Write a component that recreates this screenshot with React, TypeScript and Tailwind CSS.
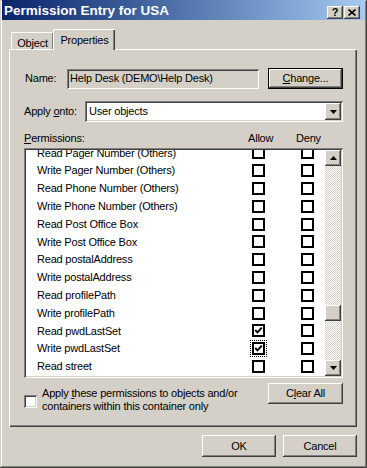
import React from "react";

const raised =
  "shadow-[inset_-1px_-1px_#404040,inset_1px_1px_#ffffff,inset_-2px_-2px_#808080,inset_2px_2px_#d4d0c8]";
const sunken =
  "shadow-[inset_1px_1px_#808080,inset_-1px_-1px_#ffffff,inset_2px_2px_#404040,inset_-2px_-2px_#d4d0c8]";

const rows: { label: string; allow?: boolean; focus?: boolean }[] = [
  { label: "Read Pager Number (Others)" },
  { label: "Write Pager Number (Others)" },
  { label: "Read Phone Number (Others)" },
  { label: "Write Phone Number (Others)" },
  { label: "Read Post Office Box" },
  { label: "Write Post Office Box" },
  { label: "Read postalAddress" },
  { label: "Write postalAddress" },
  { label: "Read profilePath" },
  { label: "Write profilePath" },
  { label: "Read pwdLastSet", allow: true },
  { label: "Write pwdLastSet", allow: true, focus: true },
  { label: "Read street" },
];

function Check({ checked, focus }: { checked?: boolean; focus?: boolean }) {
  return (
    <div
      className={
        focus
          ? "w-[13px] h-[13px] border-2 border-black bg-white flex items-center justify-center outline-1 outline-dotted outline-black outline-offset-[1px]"
          : "w-[13px] h-[13px] border-2 border-black bg-white flex items-center justify-center"
      }
    >
      {checked && (
        <svg width="9" height="9" viewBox="0 0 9 9">
          <polyline points="1.2,4 3.5,6.4 7.8,1.6" fill="none" stroke="black" strokeWidth="1.9" />
        </svg>
      )}
    </div>
  );
}

function Arrow({ dir }: { dir: "up" | "down" }) {
  return (
    <svg width="7" height="4" viewBox="0 0 7 4">
      {dir === "down" ? <polygon points="0,0 7,0 3.5,4" fill="black" /> : <polygon points="0,4 7,4 3.5,0" fill="black" />}
    </svg>
  );
}

export default function App() {
  return (
    <div
      className={`w-[367px] h-[468px] bg-[#d4d0c8] font-['Liberation_Sans',Arial,sans-serif] text-[11px] tracking-[-0.2px] text-black flex flex-col overflow-hidden shadow-[inset_-1px_-1px_#404040,inset_1px_1px_#d4d0c8,inset_-2px_-2px_#808080,inset_2px_2px_#ffffff]`}
    >
      {/* Title bar */}
      <div className="mx-[2px] h-[20px] shrink-0 flex items-center bg-linear-to-r from-[#0a246a] to-[#a6caf0] pl-[2px] pr-[5px]">
        <span className="font-['Liberation_Sans',Arial,sans-serif] font-bold text-white text-[13.5px] leading-none tracking-[0px] mt-[1px]">
          Permission Entry for USA
        </span>
        <div className="ml-auto flex gap-[1px] mt-[4px]">
          <div className={`w-[16px] h-[13px] bg-[#d4d0c8] ${raised} flex items-center justify-center`}>
            <span className="font-bold text-[11px] leading-none tracking-normal">?</span>
          </div>
          <div className={`w-[16px] h-[13px] bg-[#d4d0c8] ${raised} flex items-center justify-center`}>
            <svg width="8" height="7" viewBox="0 0 8 7">
              <path d="M0.5 0.5 L7.5 6.5 M7.5 0.5 L0.5 6.5" stroke="black" strokeWidth="1.6" />
            </svg>
          </div>
        </div>
      </div>

      {/* Tabs */}
      <div className="mt-[7px] ml-[9px] h-[22px] shrink-0 flex items-end">
        <div className="ml-[2px] w-[42px] h-[17px] border-t border-l border-white rounded-tl-[2px] shadow-[inset_-1px_0_#808080] flex justify-center pt-[2px]">
          <span>Object</span>
        </div>
        <div className="relative z-10 -mb-[1px] w-[62px] h-[21px] bg-[#d4d0c8] border-t border-l border-white rounded-tl-[2px] shadow-[inset_-1px_0_#404040,inset_-2px_0_#808080] flex justify-center pt-[2px]">
          <span>Properties</span>
        </div>
      </div>

      {/* Panel */}
      <div className="ml-[9px] w-[348px] h-[378px] shrink-0 border-t border-l border-white shadow-[inset_-1px_-1px_#404040,inset_-2px_-2px_#808080] pl-[14px] pr-[14px] pt-[18px] flex flex-col">
        {/* Name row */}
        <div className="h-[21px] flex items-center">
          <div className="w-[43px] pl-[1px]">Name:</div>
          <div className={`w-[192px] h-[20px] ${sunken} flex items-center pl-[3px]`}>Help Desk (DEMO\Help Desk)</div>
          <div className="ml-auto w-[75px] h-[21px] border border-black">
            <div className={`w-full h-full ${raised} flex items-center justify-center`}>
              <span>
                <span className="underline underline-offset-[1px]">C</span>hange...
              </span>
            </div>
          </div>
        </div>

        {/* Apply onto */}
        <div className="mt-[12px] h-[21px] flex items-center">
          <div className="w-[61px]">
            Apply <span className="underline underline-offset-[1px]">o</span>nto:
          </div>
          <div className={`w-[258px] h-[21px] ${sunken} bg-white p-[2px] flex items-center`}>
            <span className="pl-[2px]">User objects</span>
            <div className={`ml-auto w-[16px] h-[17px] bg-[#d4d0c8] ${raised} flex items-center justify-center`}>
              <Arrow dir="down" />
            </div>
          </div>
        </div>

        {/* Header */}
        <div className="mt-[9px] h-[15px] flex items-center">
          <div className="w-[224px]">
            <span className="underline underline-offset-[1px]">P</span>ermissions:
          </div>
          <div className="w-[48px]">Allow</div>
          <div>Deny</div>
        </div>

        {/* List */}
        <div className={`mt-[2px] h-[230px] ${sunken} bg-white p-[2px] flex`}>
          <div className="flex-1 overflow-hidden">
            <div className="-mt-[6px] flex flex-col">
              {rows.map((r) => (
                <div key={r.label} className="h-[17.8px] shrink-0 flex items-center">
                  <div className="w-[226px] pl-[11px] whitespace-nowrap">{r.label}</div>
                  <Check checked={r.allow} focus={r.focus} />
                  <div className="w-[36px]" />
                  <Check />
                </div>
              ))}
            </div>
          </div>
          <div className="w-[16px] flex flex-col">
            <div className={`h-[16px] bg-[#d4d0c8] ${raised} flex items-center justify-center`}>
              <Arrow dir="up" />
            </div>
            <div className="flex-1 flex flex-col bg-[repeating-conic-gradient(#d4d0c8_0%_25%,#ffffff_0%_50%)] bg-[length:2px_2px]">
              <div className="h-[139px]" />
              <div className={`h-[16px] bg-[#d4d0c8] ${raised}`} />
            </div>
            <div className={`h-[16px] bg-[#d4d0c8] ${raised} flex items-center justify-center`}>
              <Arrow dir="down" />
            </div>
          </div>
        </div>

        {/* Bottom row */}
        <div className="mt-[5px] flex">
          <div className={`mt-[12px] w-[13px] h-[13px] bg-white ${sunken}`} />
          <div className="ml-[5px] mt-[4px] leading-[13px]">
            Apply <span className="underline underline-offset-[1px]">t</span>hese permissions to objects and/or
            <br />
            containers within this container only
          </div>
          <div className={`ml-auto w-[75px] h-[21px] ${raised} flex items-center justify-center`}>
            <span>
              C<span className="underline underline-offset-[1px]">l</span>ear All
            </span>
          </div>
        </div>
      </div>

      {/* Dialog buttons */}
      <div className="mt-[8px] pr-[10px] flex justify-end gap-[7px]">
        <div className={`w-[74px] h-[22px] ${raised} flex items-center justify-center`}>OK</div>
        <div className={`w-[74px] h-[22px] ${raised} flex items-center justify-center`}>Cancel</div>
      </div>
    </div>
  );
}
